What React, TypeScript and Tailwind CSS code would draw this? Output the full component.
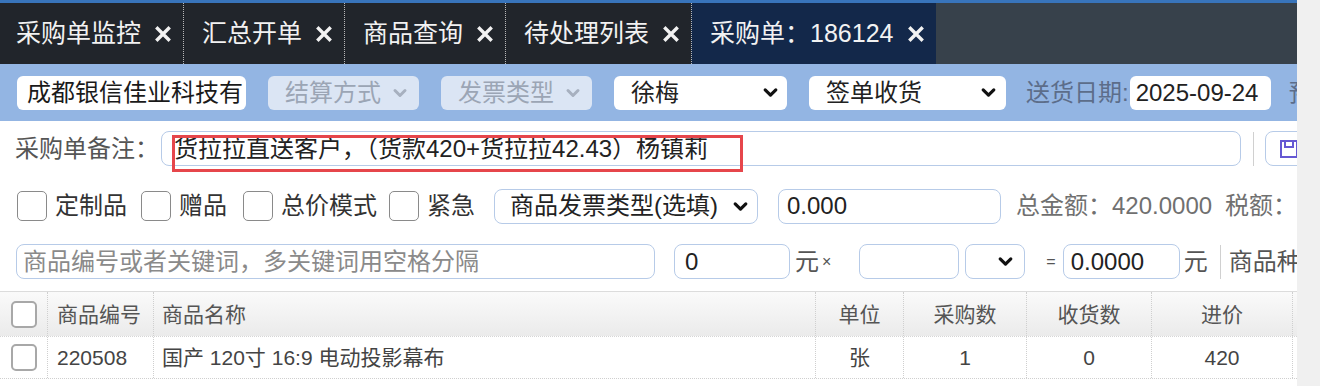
import React from 'react';

const tabs = [
  { title: '采购单监控', active: false },
  { title: '汇总开单', active: false },
  { title: '商品查询', active: false },
  { title: '待处理列表', active: false },
  { title: '采购单：186124', active: true },
];

function Chevron({ className }: { className?: string }) {
  return (
    <svg viewBox="0 0 16 16" className={className} fill="none" stroke="currentColor" strokeWidth={3} strokeLinecap="round" strokeLinejoin="round">
      <path d="M3 5.5l5 5 5-5" />
    </svg>
  );
}

function CloseX() {
  return (
    <svg viewBox="0 0 16 16" className="w-[16px] h-[16px]" fill="none" stroke="currentColor" strokeWidth={3.4} strokeLinecap="square">
      <path d="M2.5 2.5l11 11M13.5 2.5l-11 11" />
    </svg>
  );
}

function Checkbox({ small }: { small?: boolean }) {
  return (
    <span
      className={
        small
          ? 'block w-[26px] h-[27px] rounded-[5px] border-2 border-[#a8a8a8] bg-white'
          : 'block w-[30px] h-[30px] rounded-[5px] border border-[#8a8a8a] bg-white'
      }
    />
  );
}

export default function App() {
  return (
    <div className="flex w-[1320px] h-[386px] overflow-hidden bg-white text-[24px] leading-none text-[#222] font-['Liberation_Sans','Noto_Sans_CJK_SC',sans-serif]">
      <div className="w-[1297px] shrink-0 overflow-hidden flex flex-col">
        {/* tab strip */}
        <div className="h-[3px] shrink-0 bg-[#3874bb]" />
        <div className="h-[61px] shrink-0 flex bg-[#37414b] text-[25px] text-[#f2f2f2] *:shrink-0">
          {tabs.map((t, i) => (
            <div
              key={t.title}
              className={
                (t.active ? 'bg-[#13284a] ' : 'bg-[#21252b] ') +
                (i > 0 ? 'border-l border-dotted border-[#b9b9b9] pl-[18px] ' : 'pl-[16px] ') +
                'flex items-center pr-[12px] gap-[14px]'
              }
            >
              <span>{t.title}</span>
              <CloseX />
            </div>
          ))}
        </div>

        {/* header fields */}
        <div className="h-[57px] shrink-0 bg-[#93b5e3] flex items-center pl-[17px] whitespace-nowrap *:shrink-0">
          <div className="w-[229px] h-[34px] rounded-[6px] bg-white flex items-center pl-[10px] text-[#1a1a1a]">成都银信佳业科技有</div>
          <div className="ml-[22px] w-[151px] h-[34px] rounded-[6px] bg-[#dbe5f4] flex items-center pl-[17px] text-[#9ba5b5]">
            结算方式
            <Chevron className="ml-[11px] w-[16px] h-[16px] text-[#a7b0bf]" />
          </div>
          <div className="ml-[22px] w-[151px] h-[34px] rounded-[6px] bg-[#dbe5f4] flex items-center pl-[17px] text-[#9ba5b5]">
            发票类型
            <Chevron className="ml-[11px] w-[16px] h-[16px] text-[#a7b0bf]" />
          </div>
          <div className="ml-[22px] w-[173px] h-[34px] rounded-[6px] bg-white flex items-center justify-between pl-[17px] pr-[8px]">
            徐梅
            <Chevron className="w-[17px] h-[17px] text-[#111]" />
          </div>
          <div className="ml-[22px] w-[197px] h-[34px] rounded-[6px] bg-white flex items-center justify-between pl-[17px] pr-[9px]">
            签单收货
            <Chevron className="w-[17px] h-[17px] text-[#111]" />
          </div>
          <span className="ml-[20px] text-[#5c6d8a]">送货日期:</span>
          <div className="ml-[1px] w-[141px] h-[34px] rounded-[6px] bg-white flex items-center pl-[6px]">2025-09-24</div>
          <span className="ml-[18px] text-[#5c6d8a]">预计到货</span>
        </div>

        {/* remark */}
        <div className="h-[55px] shrink-0 flex items-center pl-[15px] whitespace-nowrap *:shrink-0">
          <span className="text-[#555]">采购单备注：</span>
          <div className="relative ml-[2px] w-[1080px] h-[35px] rounded-[8px] border border-[#b7cbe8] flex items-center pl-[12px]">
            货拉拉直送客户，（货款420+货拉拉42.43）杨镇莉
            <div className="absolute left-[10px] top-[3px] w-[571px] h-[37px] border-[3px] border-[#e6464b]" />
          </div>
          <span className="ml-[12px] w-px h-[34px] bg-[#d0d0d0]" />
          <div className="ml-[11px] w-[60px] h-[35px] rounded-[8px] border border-[#b7cbe8] flex items-center pl-[13px]">
            <svg viewBox="0 0 20 20" className="w-[20px] h-[20px]" fill="none" stroke="#6558d3" strokeWidth={2}>
              <path d="M2 2h16v16H2z" />
              <path d="M6 2v6h8V2" />
            </svg>
          </div>
        </div>

        {/* flags */}
        <div className="h-[60px] shrink-0 flex items-center pl-[17px] whitespace-nowrap text-[#333] *:shrink-0">
          <Checkbox />
          <span className="ml-[8px]">定制品</span>
          <span className="ml-[14px]"><Checkbox /></span>
          <span className="ml-[8px]">赠品</span>
          <span className="ml-[16px]"><Checkbox /></span>
          <span className="ml-[8px]">总价模式</span>
          <span className="ml-[12px]"><Checkbox /></span>
          <span className="ml-[8px]">紧急</span>
          <div className="ml-[19px] w-[264px] h-[35px] rounded-[8px] border border-[#b7cbe8] flex items-center justify-between pl-[15px] pr-[8px] text-[#222]">
            商品发票类型(选填)
            <Chevron className="w-[17px] h-[17px] text-[#111]" />
          </div>
          <div className="ml-[20px] w-[223px] h-[35px] rounded-[8px] border border-[#b7cbe8] flex items-center pl-[8px] text-[#222]">0.000</div>
          <span className="ml-[15px] text-[#707070]">总金额：420.0000</span>
          <span className="ml-[13px] text-[#707070]">税额：0.0000</span>
        </div>

        {/* item search */}
        <div className="h-[51px] shrink-0 flex items-center pl-[16px] whitespace-nowrap *:shrink-0">
          <div className="w-[639px] h-[35px] rounded-[8px] border border-[#b7cbe8] flex items-center pl-[6px] text-[#8a8a8a]">
            商品编号或者关键词，多关键词用空格分隔
          </div>
          <div className="ml-[19px] w-[116px] h-[35px] rounded-[8px] border border-[#b7cbe8] flex items-center pl-[10px]">0</div>
          <span className="ml-[5px] text-[#555]">元</span>
          <span className="ml-[3px] text-[16px] text-[#555]">×</span>
          <div className="ml-[28px] w-[100px] h-[35px] rounded-[8px] border border-[#b7cbe8]" />
          <div className="ml-[6px] w-[60px] h-[35px] rounded-[8px] border border-[#b7cbe8] flex items-center justify-end pr-[10px]">
            <Chevron className="w-[17px] h-[17px] text-[#111]" />
          </div>
          <span className="ml-[21px] text-[16px] text-[#555]">=</span>
          <div className="ml-[7px] w-[117px] h-[35px] rounded-[8px] border border-[#b7cbe8] flex items-center pl-[7px]">0.0000</div>
          <span className="ml-[4px] text-[#555]">元</span>
          <span className="ml-[12px] w-px h-[34px] bg-[#d0d0d0]" />
          <span className="ml-[8px] text-[#555]">商品种类</span>
        </div>

        {/* table */}
        <div className="mt-[4px] shrink-0 text-[21px] text-[#444] whitespace-nowrap">
          <div className="h-[45px] flex border-t border-[#dcdcdc] bg-gradient-to-b from-[#fafafa] to-[#ebebeb] text-[#555] *:shrink-0">
            <div className="w-[48px] flex items-center pl-[11px] border-r border-dotted border-[#cfcfcf]"><Checkbox small /></div>
            <div className="w-[106px] flex items-center pl-[9px] border-r border-dotted border-[#cfcfcf]">商品编号</div>
            <div className="w-[662px] flex items-center pl-[8px] border-r border-dotted border-[#cfcfcf]">商品名称</div>
            <div className="w-[88px] flex items-center justify-center border-r border-dotted border-[#cfcfcf]">单位</div>
            <div className="w-[123px] flex items-center justify-center border-r border-dotted border-[#cfcfcf]">采购数</div>
            <div className="w-[125px] flex items-center justify-center border-r border-dotted border-[#cfcfcf]">收货数</div>
            <div className="w-[141px] flex items-center justify-center border-r border-dotted border-[#cfcfcf]">进价</div>
            <div className="w-[120px]" />
          </div>
          <div className="h-[43px] flex border-t border-[#d6d6d6] border-b border-b-[#cfcfcf] border-dotted *:shrink-0">
            <div className="w-[48px] flex items-center pl-[11px] border-r border-dotted border-[#cfcfcf]"><Checkbox small /></div>
            <div className="w-[106px] flex items-center pl-[9px] border-r border-dotted border-[#cfcfcf]">220508</div>
            <div className="w-[662px] flex items-center pl-[8px] border-r border-dotted border-[#cfcfcf]">国产 120寸 16:9 电动投影幕布</div>
            <div className="w-[88px] flex items-center justify-center border-r border-dotted border-[#cfcfcf]">张</div>
            <div className="w-[123px] flex items-center justify-center border-r border-dotted border-[#cfcfcf]">1</div>
            <div className="w-[125px] flex items-center justify-center border-r border-dotted border-[#cfcfcf]">0</div>
            <div className="w-[141px] flex items-center justify-center border-r border-dotted border-[#cfcfcf]">420</div>
            <div className="w-[120px]" />
          </div>
        </div>
      </div>
      <div className="flex-1 bg-[#f0f0f0]" />
    </div>
  );
}
